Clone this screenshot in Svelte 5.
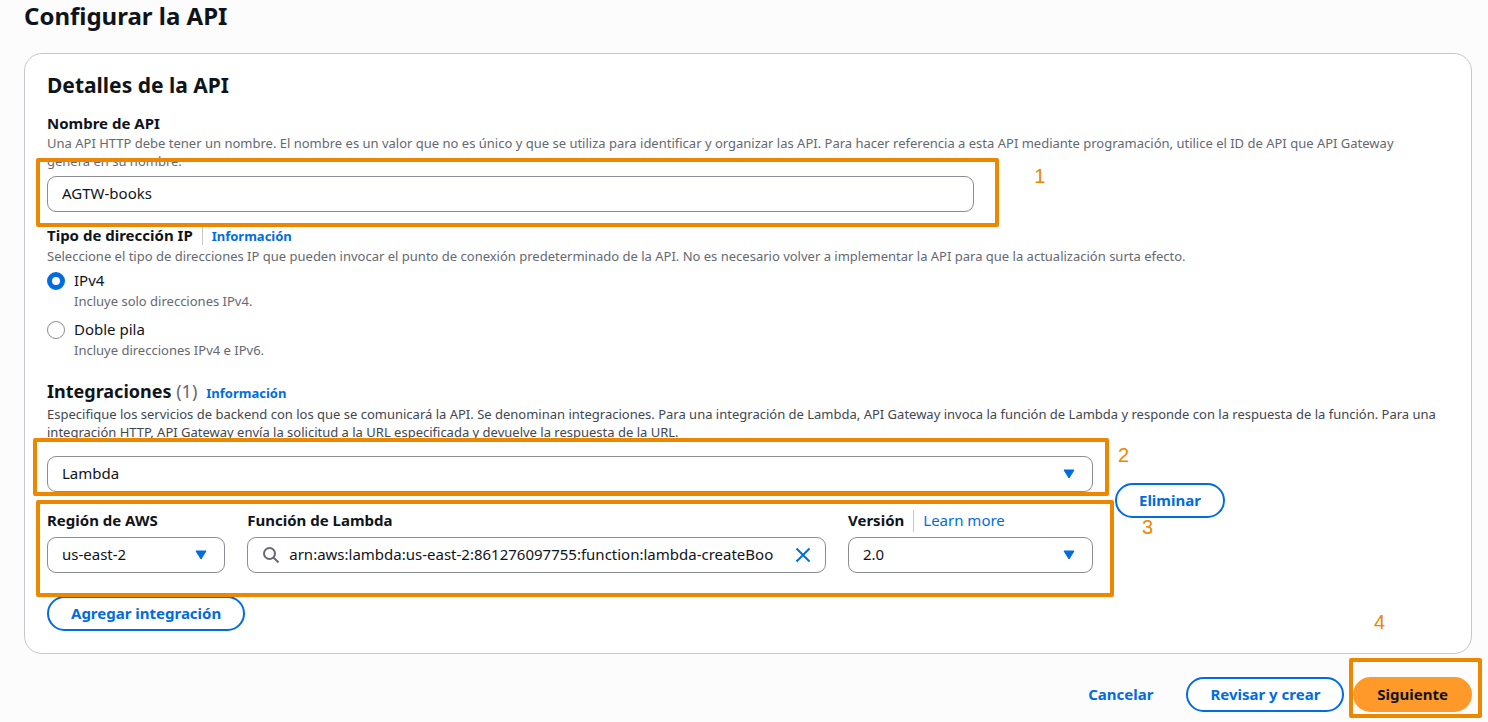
<script>
  let name = $state('AGTW-books');
  let ipType = $state('ipv4');
  let integration = $state('Lambda');
  let region = $state('us-east-2');
  let arn = $state('arn:aws:lambda:us-east-2:861276097755:function:lambda-createBoo');
  let version = $state('2.0');

  const ipOptions = [
    { value: 'ipv4', label: 'IPv4', hint: 'Incluye solo direcciones IPv4.' },
    { value: 'dual', label: 'Doble pila', hint: 'Incluye direcciones IPv4 e IPv6.' }
  ];
</script>

{#snippet caret()}
  <svg class="caret" viewBox="0 0 12 10" aria-hidden="true"><path d="M1 1h10L6 9z" /></svg>
{/snippet}

<main>
  <h1>Configurar la API</h1>

  <section class="card">
    <h2>Detalles de la API</h2>

    <div class="field">
      <label class="label" for="name">Nombre de API</label>
      <p class="hint inset">Una API HTTP debe tener un nombre. El nombre es un valor que no es único y que se utiliza para identificar y organizar las API. Para hacer referencia a esta API mediante programación, utilice el ID de API que API Gateway genera en su nombre.</p>
      <div class="grid name-row">
        <div class="name-cell">
          <input class="control" id="name" type="text" bind:value={name} />
          <span class="mark mark-1"></span>
          <span class="num num-1">1</span>
        </div>
      </div>
    </div>

    <div class="field ip" role="radiogroup" aria-labelledby="ip-label">
      <div class="label-row">
        <span class="label" id="ip-label">Tipo de dirección IP</span>
        <a class="info ruled" href="#ip">Información</a>
      </div>
      <p class="hint">Seleccione el tipo de direcciones IP que pueden invocar el punto de conexión predeterminado de la API. No es necesario volver a implementar la API para que la actualización surta efecto.</p>
      <div class="radios">
        {#each ipOptions as o}
          <label class="radio">
            <input type="radio" name="ip" value={o.value} bind:group={ipType} />
            <span>
              <span class="radio-label">{o.label}</span>
              <span class="hint">{o.hint}</span>
            </span>
          </label>
        {/each}
      </div>
    </div>

    <div class="heading">
      <h3>Integraciones <span class="count">(1)</span></h3>
      <a class="info" href="#integrations">Información</a>
    </div>
    <p class="hint dark">Especifique los servicios de backend con los que se comunicará la API. Se denominan integraciones. Para una integración de Lambda, API Gateway invoca la función de Lambda y responde con la respuesta de la función. Para una integración HTTP, API Gateway envía la solicitud a la URL especificada y devuelve la respuesta de la URL.</p>

    <div class="grid integration">
      <div class="fields">
        <div class="select">
          <select class="control" aria-label="Tipo de integración" bind:value={integration}>
            <option>Lambda</option>
            <option>HTTP</option>
          </select>
          {@render caret()}
          <span class="mark mark-2"></span>
          <span class="num num-2">2</span>
        </div>

        <div class="grid details">
          <div class="grid target">
            <div class="region">
              <div class="label-row"><label class="label" for="region">Región de AWS</label></div>
              <div class="select">
                <select class="control" id="region" bind:value={region}>
                  <option>us-east-2</option>
                  <option>us-east-1</option>
                </select>
                {@render caret()}
              </div>
            </div>
            <div class="lambda">
              <div class="label-row"><label class="label" for="arn">Función de Lambda</label></div>
              <div class="control search">
                <svg class="glass" viewBox="0 0 18 18" aria-hidden="true"><circle cx="7.5" cy="7.5" r="5.5" /><path d="M11.5 11.5l5 5" /></svg>
                <input id="arn" type="text" bind:value={arn} />
                <button class="clear" aria-label="Borrar" onclick={() => (arn = '')}>
                  <svg viewBox="0 0 16 16" aria-hidden="true"><path d="M1.5 1.5l13 13M14.5 1.5l-13 13" /></svg>
                </button>
              </div>
            </div>
          </div>
          <div class="version">
            <div class="label-row">
              <label class="label" for="version">Versión</label>
              <a class="more ruled" href="#version">Learn more</a>
            </div>
            <div class="select">
              <select class="control" id="version" bind:value={version}>
                <option>2.0</option>
                <option>1.0</option>
              </select>
              {@render caret()}
            </div>
          </div>
          <span class="mark mark-3"></span>
          <span class="num num-3">3</span>
        </div>
      </div>
      <div class="remove"><button class="btn">Eliminar</button></div>
    </div>

    <button class="btn add">Agregar integración</button>
  </section>

  <footer>
    <button class="btn link">Cancelar</button>
    <button class="btn">Revisar y crear</button>
    <div class="next">
      <button class="btn primary">Siguiente</button>
      <span class="mark mark-4"></span>
      <span class="num num-4">4</span>
    </div>
  </footer>
</main>

<style>
  :global(body) {
    margin: 0;
    background: #fcfcfd;
  }
  main {
    padding: 1px 16px 10px 24px;
    font-family: 'Noto Sans', 'Open Sans', sans-serif;
    font-size: 15px;
    line-height: 20px;
    color: #0f141a;
  }
  * {
    box-sizing: border-box;
  }
  h1, h2, h3, p {
    margin: 0;
  }
  h1 {
    font-size: 24px;
    line-height: 30px;
  }
  h2 {
    font-size: 21px;
    line-height: 28px;
    margin-bottom: 15px;
  }
  h3 {
    font-size: 18px;
    line-height: 24px;
  }
  a {
    color: #006ce0;
    text-decoration: none;
  }
  .card {
    margin-top: 22px;
    padding: 17px 22px 22px;
    background: #fff;
    border: 1px solid #c6c6cd;
    border-radius: 18px;
  }
  .label {
    display: block;
    padding-bottom: 2px;
    font-weight: 700;
    line-height: 18px;
  }
  .hint {
    display: block;
    font-size: 13px;
    line-height: 18px;
    color: #656871;
  }
  .inset {
    padding-right: 22px;
  }
  .dark {
    color: #424650;
  }
  .grid {
    display: grid;
    grid-template-columns: repeat(12, minmax(0, 1fr));
    column-gap: 22px;
  }
  .name-row {
    margin-top: 6px;
  }
  .name-cell {
    grid-column: span 8;
    position: relative;
  }
  .control {
    display: block;
    width: 100%;
    height: 36px;
    padding: 0 14px 2px;
    font: inherit;
    color: #0f141a;
    background: #fff;
    border: 1px solid #8c8c94;
    border-radius: 9px;
    outline: none;
    appearance: none;
  }
  .ip {
    margin-top: 14px;
  }
  .label-row {
    display: flex;
    align-items: center;
  }
  .ip .label-row {
    margin-bottom: 1px;
  }
  .info {
    font-size: 13px;
    line-height: 18px;
    font-weight: 700;
  }
  .ruled {
    margin-left: 9px;
    padding-left: 9px;
    border-left: 1px solid #c6c6cd;
  }
  .more {
    margin-block: -1px;
    padding-bottom: 2px;
  }
  .radios {
    display: grid;
    gap: 10px;
    margin-top: 6px;
  }
  .radio {
    display: flex;
    gap: 9px;
  }
  .radio-label {
    display: block;
    padding-bottom: 3px;
    line-height: 18px;
  }
  .radio input {
    appearance: none;
    width: 18px;
    height: 18px;
    margin: 1px 0 0;
    background: #fff;
    border: 1px solid #8c8c94;
    border-radius: 50%;
  }
  .radio input:checked {
    border: 5px solid #006ce0;
  }
  .heading {
    display: flex;
    align-items: baseline;
    gap: 9px;
    margin: 20px 0 2px;
  }
  .count {
    font-weight: 400;
    color: #656871;
  }
  .integration {
    margin-top: 15px;
  }
  .fields {
    grid-column: span 9;
  }
  .remove {
    grid-column: span 3;
    padding-top: 27px;
  }
  .select {
    position: relative;
  }
  .caret {
    position: absolute;
    right: 18px;
    top: 13px;
    width: 12px;
    height: 10px;
    pointer-events: none;
  }
  .caret path {
    fill: #006ce0;
    stroke: #006ce0;
    stroke-width: 1;
    stroke-linejoin: round;
  }
  .details {
    position: relative;
    margin-top: 19px;
  }
  .details .label-row {
    margin-bottom: 6px;
  }
  .target {
    grid-column: span 9;
  }
  .region {
    grid-column: span 3;
  }
  .lambda {
    grid-column: span 9;
  }
  .version {
    grid-column: span 3;
  }
  .search {
    display: flex;
    align-items: center;
    padding-bottom: 0;
  }
  .glass {
    flex: none;
    width: 18px;
    height: 18px;
    margin-right: 9px;
    fill: none;
    stroke: #656871;
    stroke-width: 2;
  }
  .search input {
    flex: 1;
    min-width: 0;
    padding: 0 0 2px;
    font: inherit;
    color: inherit;
    border: 0;
    outline: 0;
    background: none;
  }
  .clear {
    flex: none;
    display: flex;
    margin-left: 11px;
    padding: 0;
    background: none;
    border: 0;
  }
  .clear svg {
    width: 16px;
    height: 16px;
    fill: none;
    stroke: #006ce0;
    stroke-width: 2;
  }
  .btn {
    height: 35px;
    padding: 0 22px 2px;
    font: inherit;
    font-weight: 700;
    color: #006ce0;
    background: #fff;
    border: 2px solid #006ce0;
    border-radius: 18px;
    white-space: nowrap;
  }
  .add {
    margin-top: 23px;
  }
  footer {
    display: flex;
    justify-content: flex-end;
    gap: 9px;
    margin-top: 23px;
  }
  .link {
    background: none;
    border-color: transparent;
  }
  .primary {
    color: #0f141a;
    background: #ff9929;
    border-color: #ff9929;
  }
  .next {
    position: relative;
  }
  .mark {
    position: absolute;
    border: 4px solid #ee8700;
    border-radius: 2px;
    pointer-events: none;
  }
  .mark-1 { inset: -18px -25px -15px -11px; }
  .mark-2 { inset: -18px -16px -4px -14px; }
  .mark-3 { inset: -11px -21px -24px -11px; }
  .mark-4 { inset: -19px -10px -6px -4px; }
  .num {
    position: absolute;
    font-family: 'Liberation Sans', Arial, sans-serif;
    font-size: 20px;
    line-height: 16px;
    color: #ee8700;
  }
  .num-1 { right: -71px; top: -8px; }
  .num-2 { right: -36px; top: -9px; }
  .num-3 { right: -60px; top: 8px; }
  .num-4 { right: 87px; top: -63px; }
</style>
